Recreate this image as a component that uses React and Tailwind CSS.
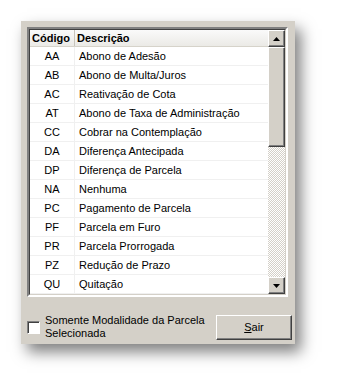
const rows = [
  ["AA", "Abono de Adesão"],
  ["AB", "Abono de Multa/Juros"],
  ["AC", "Reativação de Cota"],
  ["AT", "Abono de Taxa de Administração"],
  ["CC", "Cobrar na Contemplação"],
  ["DA", "Diferença Antecipada"],
  ["DP", "Diferença de Parcela"],
  ["NA", "Nenhuma"],
  ["PC", "Pagamento de Parcela"],
  ["PF", "Parcela em Furo"],
  ["PR", "Parcela Prorrogada"],
  ["PZ", "Redução de Prazo"],
  ["QU", "Quitação"],
];

const Arrow = ({ down }) => (
  <svg width="7" height="4" viewBox="0 0 7 4">
    <path d={down ? "M0 0H7L3.5 4Z" : "M0 4H7L3.5 0Z"} fill="#000" />
  </svg>
);

const ScrollBtn = ({ down }) => (
  <div className="h-[17px] w-[17px] flex items-center justify-center bg-[#d4d0c8] border border-t-white border-l-white border-r-[#404040] border-b-[#404040] shadow-[inset_-1px_-1px_0_#808080]">
    <Arrow down={down} />
  </div>
);

export default function App() {
  return (
    <div className="w-[338px] h-[387px] bg-white pt-[21px] pl-[21px] font-['Liberation_Sans',Arial,sans-serif] text-black">
      <div className="w-[274px] h-[323px] bg-[#d4d0c8] p-[6px] shadow-[6px_8px_14px_rgba(0,0,0,0.5)]">
        {/* List */}
        <div className="w-[261px] h-[270px] border-2 border-t-[#808080] border-l-[#808080] border-r-white border-b-white">
          <div className="flex h-full border border-t-[#404040] border-l-[#404040] border-r-[#d4d0c8] border-b-[#d4d0c8]">
            <div className="w-[239px] bg-white overflow-hidden">
              <div className="flex h-[17px] items-center bg-[linear-gradient(#fafafa,#ebeae6)] border-b border-[#d6d3ca] text-[11px] font-bold">
                <div className="w-[45px] pl-[2px] border-r border-[#c8c5bc] h-full flex items-center">Código</div>
                <div className="pl-[2px]">Descrição</div>
              </div>
              {rows.map(([c, d]) => (
                <div key={c} className="flex h-[19px] items-center border-b border-[#f0f0f0] text-[11px]">
                  <div className="w-[45px] text-center border-r border-[#f0f0f0] h-full flex items-center justify-center">{c}</div>
                  <div className="pl-[4px]">{d}</div>
                </div>
              ))}
            </div>
            <div className="w-[17px] flex flex-col bg-[repeating-conic-gradient(#d4d0c8_0_25%,#ffffff_0_50%)] bg-[length:2px_2px]">
              <ScrollBtn />
              <div className="h-[100px] bg-[#d4d0c8] border border-t-white border-l-white border-r-[#404040] border-b-[#404040] shadow-[inset_-1px_-1px_0_#808080]" />
              <div className="flex-1" />
              <ScrollBtn down />
            </div>
          </div>
        </div>
        {/* Footer */}
        <div className="flex items-center mt-[17px]">
          <div className="shrink-0 w-[13px] h-[13px] bg-white border border-t-[#808080] border-l-[#808080] border-r-white border-b-white shadow-[inset_1px_1px_0_#404040]" />
          <div className="shrink-0 ml-[5px] w-[165px] text-[11px] leading-[13px]">Somente Modalidade da Parcela Selecionada</div>
          <button className="shrink-0 ml-auto mr-[-3px] w-[76px] h-[25px] bg-[#d4d0c8] border border-t-white border-l-white border-r-[#404040] border-b-[#404040] shadow-[inset_-1px_-1px_0_#808080] text-[11px]">
            <span className="underline">S</span>air
          </button>
        </div>
      </div>
    </div>
  );
}
